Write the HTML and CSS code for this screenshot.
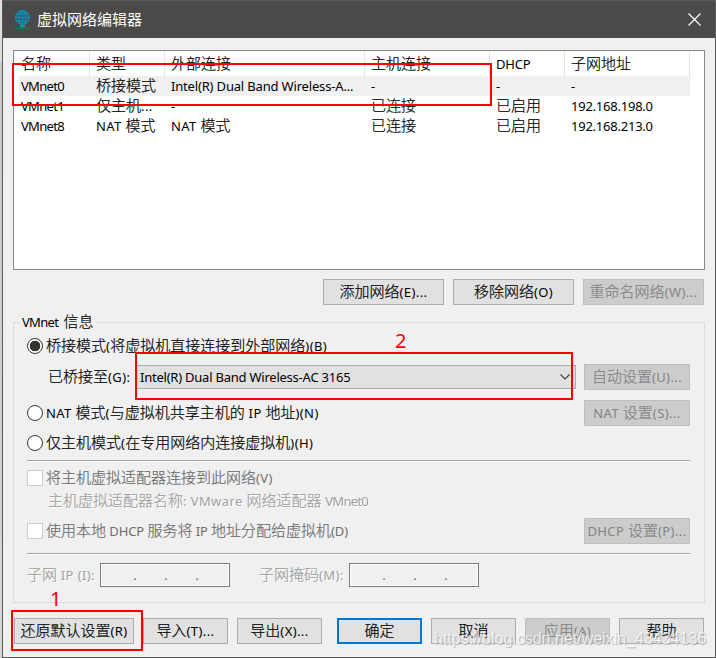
FILE: index.html
```html
<!DOCTYPE html>
<html lang="zh-CN">
<head>
<meta charset="utf-8">
<title>虚拟网络编辑器</title>
<link rel="stylesheet" href="styles.css">
</head>
<body>
<div class="window">
  <header class="titlebar">
    <svg class="globe" width="17" height="20" viewBox="0 0 17 20" fill="none" stroke="#128bb5" stroke-width="1.3">
      <circle cx="8.5" cy="7.5" r="6.8"/><ellipse cx="8.5" cy="7.5" rx="3.4" ry="6.8"/>
      <path d="M8.5 .7V17M1.7 7.5h13.6M2.8 4h11.4M2.8 11h11.4"/>
      <path d="M1 18.3h15" stroke="#16806a" stroke-dasharray="4 1"/><path d="M6 16.3h5" stroke="#12a3a0" stroke-width="2"/>
    </svg>
    <h1>虚拟网络编辑器</h1>
    <svg class="close" width="13" height="13" viewBox="0 0 13 13" stroke="#fff" stroke-width="1.2"><path d="M.5.5l12 12M12.5.5l-12 12"/></svg>
  </header>

  <main class="content">
    <div class="list">
      <div class="row head"><span>名称</span><span>类型</span><span>外部连接</span><span>主机连接</span><span><i>DHCP</i></span><span>子网地址</span></div>
      <div class="row selected"><span><i class="id">VMnet0</i></span><span>桥接模式</span><span><i class="adapter-name">Intel(R) Dual Band Wireless-A...</i></span><span><i>-</i></span><span><i>-</i></span><span><i>-</i></span></div>
      <div class="row"><span><i class="id">VMnet1</i></span><span>仅主机<i class="wide">...</i></span><span><i>-</i></span><span>已连接</span><span>已启用</span><span><i>192.168.198.0</i></span></div>
      <div class="row"><span><i class="id">VMnet8</i></span><span><i class="wide">NAT </i>模式</span><span><i class="wide">NAT </i>模式</span><span>已连接</span><span>已启用</span><span><i>192.168.213.0</i></span></div>
    </div>

    <div class="net-actions">
      <button>添加网络<i>(E)...</i></button>
      <button>移除网络<i>(O)</i></button>
      <button disabled>重命名网络<i>(W)...</i></button>
    </div>

    <section class="group">
      <h2><i class="id">VMnet  </i>信息</h2>
      <div class="line bridge"><span class="radio on"></span><label>桥接模式<i>(</i>将虚拟机直接连接到外部网络<i>)(B)</i></label></div>
      <div class="line adapter">
        <label>已桥接至<i>(G):</i></label>
        <div class="combo"><i>Intel(R) Dual Band Wireless-AC 3165</i>
          <svg width="10" height="6" viewBox="0 0 10 6" fill="none" stroke="#404040" stroke-width="1.1"><path d="M.5.5L5 5 9.500.5"/></svg>
        </div>
        <button disabled>自动设置<i>(U)...</i></button>
      </div>
      <div class="line nat"><span class="radio"></span><label><i>NAT </i>模式<i>(</i>与虚拟机共享主机的<i> IP </i>地址<i>)(N)</i></label><button disabled><i>NAT </i>设置<i>(S)...</i></button></div>
      <div class="line host"><span class="radio"></span><label>仅主机模式<i>(</i>在专用网络内连接虚拟机<i>)(H)</i></label></div>
      <hr>
      <div class="line connect"><span class="check"></span><label class="dim">将主机虚拟适配器连接到此网络<i>(V)</i></label></div>
      <div class="line name"><label class="etched">主机虚拟适配器名称<i>: VMware </i>网络适配器<i class="wide"> </i><i class="id">VMnet0</i></label></div>
      <div class="line dhcp"><span class="check"></span><label class="dim tight">使用本地<i> DHCP </i>服务将<i> IP </i>地址分配给虚拟机<i>(D)</i></label><button disabled><i>DHCP </i>设置<i>(P)...</i></button></div>
      <hr>
      <div class="line subnet">
        <label class="etched ip-label">子网<i> IP (I):</i></label><div class="ip"><b>.</b><b>.</b><b>.</b></div>
        <label class="etched mask-label">子网掩码<i>(M):</i></label><div class="ip"><b>.</b><b>.</b><b>.</b></div>
      </div>
    </section>

    <footer class="footer">
      <button class="restore">还原默认设置<i>(R)</i></button>
      <button>导入<i>(T)...</i></button>
      <button>导出<i>(X)...</i></button>
      <button class="default">确定</button>
      <button>取消</button>
      <button disabled>应用<i>(A)</i></button>
      <button>帮助</button>
    </footer>
  </main>
</div>

<div class="mark mark-row"></div>
<div class="mark mark-combo"></div>
<div class="mark mark-restore"></div>
<span class="num num-1">1</span>
<span class="num num-2">2</span>
<span class="watermark">https://blog.csdn.net/weixin_43434136</span>
</body>
</html>
```
FILE: styles.css
```css
* { box-sizing: border-box; }
body {
  position: relative;
  width: 716px;
  height: 658px;
  margin: 0;
  padding-left: 2px;
  overflow: hidden;
  background: linear-gradient(#e2e2e2, #dcdcdc 61px, #c8c8c8 62px, #d6d6d6);
  color: #000;
  font: 300 15px/20px "Noto Sans CJK SC", sans-serif;
}
i {
  font: 400 13px/1 "Noto Sans", sans-serif;
  letter-spacing: -.23px;
  -webkit-text-stroke: 0;
}
.row, label, button, h2 { -webkit-text-stroke: .2px; }
label i, button i, .wide { letter-spacing: .4px; }
.tight i { letter-spacing: -.1px; }
.adapter-name { letter-spacing: -.17px; }
i.id { letter-spacing: -.7px; }
.window {
  width: 714px;
  height: 658px;
  border: 1px solid #5a5a5a;
  background: #f0f0f0;
}
.window i, .window label, .window .row span { white-space: pre; }

.titlebar {
  display: flex;
  align-items: center;
  height: 37px;
  padding: 0 14px 0 11px;
  background: #4c4a48;
  color: #fff;
}
.titlebar h1 { margin: -2px 0 0 6px; font-size: 15px; font-weight: 400; }
.titlebar .close { margin: -1px 0 0 auto; }

.content { padding: 12px 10px 0; }

.list {
  height: 220px;
  padding: 1px 0 0 5px;
  border: 1px solid #828790;
  background: #fff;
}
.row {
  display: grid;
  grid-template-columns: 71px 75px 200px 125px 75px 125px;
  width: 671px;
  height: 20px;
  line-height: 18px;
}
.row span { padding-left: 6px; }
.row span:first-child { padding-left: 2px; }
.head { height: 24px; }
.head span { border-right: 1px solid #e5e5e5; line-height: 21px; }
.selected { background: #f0f0f0; }

button {
  width: 121px;
  height: 26px;
  padding: 0 0 2px;
  border: 1px solid #adadad;
  background: #e1e1e1;
  color: #000;
  font: inherit;
  line-height: 22px;
  white-space: nowrap;
}
button:disabled { border-color: #bfbfbf; background: #ccc; color: #838383; }

.net-actions { display: flex; justify-content: flex-end; gap: 9px; margin: 9px 1px 0 0; }

.group {
  height: 281px;
  margin-top: 17px;
  padding: 0 14px 0 13px;
  border: 1px solid #dcdcdc;
}
.group h2 {
  width: max-content;
  height: 20px;
  margin: -11px 0 0 -7px;
  padding: 0 3px 0 2px;
  background: #f0f0f0;
  font-size: 15px;
  font-weight: inherit;
  line-height: 18px;
}
.line { display: flex; align-items: center; height: 26px; }
.line button { width: 106px; margin-left: auto; }
.bridge { margin-top: 1px; }
.adapter { margin-top: 5px; padding-left: 22px; }
.adapter label { width: 86px; }
.nat { margin-top: 10px; }
.host { margin-top: 4px; }
.radio {
  width: 16px;
  height: 16px;
  margin-right: 4px;
  border: 1px solid #333;
  border-radius: 50%;
  background: #fff;
}
.radio.on { background: radial-gradient(circle, #333 5px, #fff 5.6px); }
.check { width: 16px; height: 16px; margin-right: 4px; border: 1px solid #ccc; background: #fff; }
.line label { margin: -2px 0 0 -1px; }
.combo {
  display: flex;
  align-items: center;
  justify-content: space-between;
  width: 441px;
  height: 24px;
  padding: 0 5px 0 4px;
  border: 1px solid #adadad;
  background: #e1e1e1;
}
.adapter .combo { margin-left: 1px; }
hr {
  height: 2px;
  margin: 4px 0 0;
  border: 0;
  border-top: 1px solid #a0a0a0;
  border-bottom: 1px solid #fff;
}
.connect { margin-top: 3px; }
.name { height: 20px; padding-left: 22px; }
.dhcp { margin-top: 7px; }
.dhcp + hr { margin-top: 9px; }
.dim { color: #6d6d6d; }
.etched { color: #a0a0a0; text-shadow: 1px 1px 0 #fff; }
.subnet { margin-top: 7px; }
.line .ip-label { width: 74px; padding-left: 1px; }
.line .mask-label { width: 120px; padding-left: 30px; }
.ip {
  display: flex;
  justify-content: center;
  width: 130px;
  height: 24px;
  border: 1px solid #7a7a7a;
  box-shadow: inset 0 0 0 1px #fff;
  color: #6d6d6d;
  font: 13px/23px "Noto Sans", sans-serif;
}
.ip b { width: 31px; padding-left: 2px; font-weight: 400; text-align: center; }

.footer { display: flex; margin: 15px 1px 0; }
.footer button { width: 85px; margin-left: 9px; }
.footer .restore { width: 120px; margin-left: 0; }
.footer .default { margin-left: 15px; border: 2px solid #0078d7; line-height: 20px; }

.mark { position: absolute; border: 2px solid #f00; }
.mark-row { left: 12px; top: 63px; width: 480px; height: 43px; }
.mark-combo { left: 135px; top: 352px; width: 438px; height: 48px; }
.mark-restore { left: 11px; top: 610px; width: 132px; height: 41px; }
.num { position: absolute; color: #f00; font: 20px/20px "Noto Sans", sans-serif; }
.num-1 { left: 50px; top: 589px; }
.num-2 { left: 395px; top: 331px; }
.watermark {
  position: absolute;
  left: 434px;
  top: 629px;
  color: rgba(255, 255, 255, .75);
  font: 16px/20px "Liberation Sans", sans-serif;
  text-shadow: 1px 1px 1px rgba(110, 110, 110, .45);
}
```
